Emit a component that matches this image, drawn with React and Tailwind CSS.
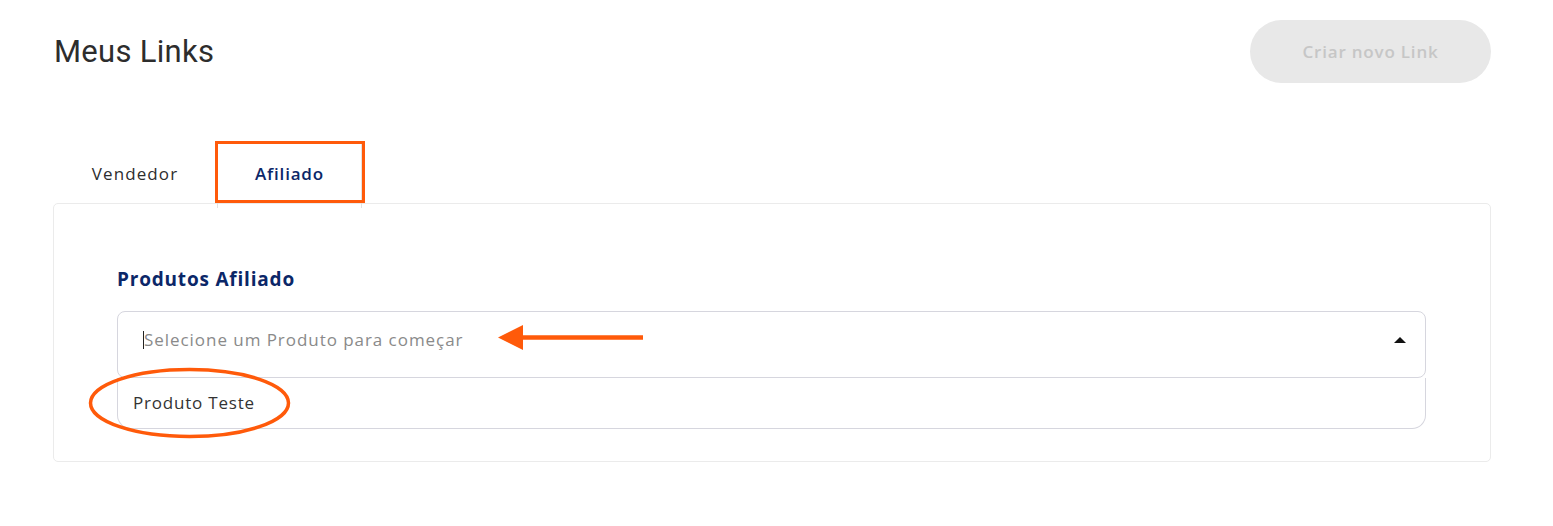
import React from "react";

export default function App() {
  return (
    <div className="relative w-[1553px] h-[526px] bg-white overflow-hidden" style={{ fontFamily: '"Open Sans", "Noto Sans", sans-serif' }}>
      <div className="ml-[53px] w-[1438px]">
        {/* Header */}
        <div className="mt-[20px] h-[63px] flex items-center justify-between">
          <h1 className="text-[31px] leading-none text-[#2d2d2d] pl-[1px] tracking-[0.3px]" style={{ fontFamily: 'Roboto, "Liberation Sans", sans-serif' }}>
            Meus Links
          </h1>
          <button className="w-[241px] h-[63px] rounded-full bg-[#e8e8e8] text-[#c6c6c6] text-[17px] font-semibold tracking-[0.8px]">
            Criar novo Link
          </button>
        </div>

        {/* Tabs */}
        <div className="mt-[58px] flex h-[62px]">
          <div className="w-[164px] flex items-center justify-center pt-[4px] text-[17px] text-[#2d2d2d] tracking-[1.1px]">
            Vendedor
          </div>
          <div className="relative w-[145px] flex items-center justify-center pt-[4px] text-[17px] font-semibold text-[#0b2768] tracking-[0.8px] border-x border-[#e2e2e2] -mb-[5px] pb-[5px] z-10">
            Afiliado
            <div className="absolute left-[-3px] top-0 w-[150px] h-[62px] border-[3px] border-[#ff5a0a]" />
          </div>
        </div>

        {/* Card */}
        <div className="border border-[#ebebeb] rounded-[5px] h-[259px] pt-[63px] px-[63px]">
          <div className="text-[19px] leading-[24px] font-bold text-[#0b2768] tracking-[0.8px]">Produtos Afiliado</div>
          <div className="mt-[20px] w-[1309px]">
            <div className="h-[67px] border border-[#d6d6de] rounded-[8px] flex items-center pl-[25px] pr-[19px] pb-[9px]">
              <span className="w-[1px] h-[18px] bg-[#222]" />
              <span className="text-[17px] text-[#8a8a8a] tracking-[0.95px]">Selecione um Produto para começar</span>
              <span className="ml-auto w-0 h-0 border-l-[6px] border-r-[6px] border-b-[6px] border-l-transparent border-r-transparent border-b-[#111]" />
            </div>
            <div className="h-[51px] border-x border-b border-[#d6d6de] rounded-b-[14px] flex items-center pl-[15px]">
              <span className="text-[17px] text-[#333] tracking-[0.8px]">Produto Teste</span>
            </div>
          </div>
        </div>
      </div>

      {/* Annotations */}
      <svg className="absolute left-0 top-0 pointer-events-none" width="1553" height="526">
        <line x1="518" y1="337.5" x2="643" y2="337.5" stroke="#ff5a0a" strokeWidth="4.5" />
        <polygon points="498,337.5 523,325 523,350" fill="#ff5a0a" />
        <ellipse cx="189.5" cy="403" rx="99" ry="33.5" fill="none" stroke="#ff5a0a" strokeWidth="3.5" />
      </svg>
    </div>
  );
}
